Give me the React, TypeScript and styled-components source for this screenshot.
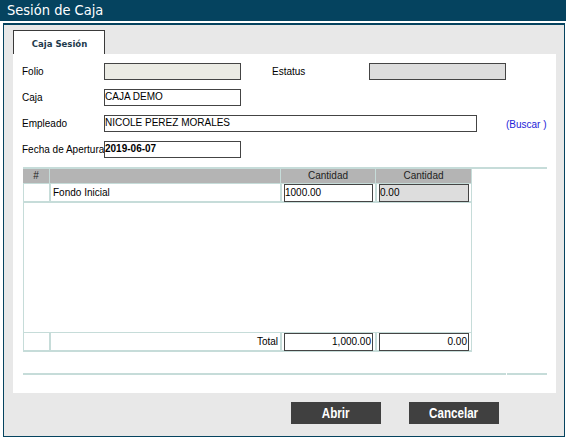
import React from 'react';
import styled, { createGlobalStyle } from 'styled-components';

const GlobalStyle = createGlobalStyle`
  html, body {
    margin: 0;
    padding: 0;
    background: #ffffff;
  }
  body {
    font-family: "Liberation Sans", Arial, sans-serif;
    font-size: 10px;
    color: #000;
  }
`;

const Window = styled.div`
  width: 566px;
  height: 439px;
  display: flex;
  flex-direction: column;
  overflow: hidden;
`;

const TitleBar = styled.header`
  height: 21px;
  background: #05435f;
  color: #ffffff;
  font-family: "DejaVu Sans Condensed", "DejaVu Sans", sans-serif;
  font-size: 14.5px;
  line-height: 21px;
  padding-left: 7px;
  flex-shrink: 0;
`;

const Frame = styled.div`
  margin: 2px 1px 2px 3px;
  border: 1px solid #05435f;
  border-top-width: 2px;
  background: #e8e8e8;
  flex: 1;
  display: flex;
  flex-direction: column;
  padding: 5px 8px 0 9px;
`;

const TabStrip = styled.div`
  display: flex;
`;

const Tab = styled.div`
  width: 92px;
  height: 24px;
  box-sizing: border-box;
  border: 1px solid #3a3a3a;
  border-bottom: none;
  background: #ffffff;
  font-family: "DejaVu Sans Condensed", "DejaVu Sans", sans-serif;
  font-weight: bold;
  font-size: 9.5px;
  color: #1d3a4c;
  display: flex;
  align-items: center;
  justify-content: center;
  padding: 1px 0 0 1px;
`;

const Panel = styled.section`
  background: #ffffff;
  height: 339px;
  padding: 9px 9px 0 9px;
  box-sizing: border-box;
  display: flex;
  flex-direction: column;
`;

const FormGrid = styled.div`
  display: grid;
  grid-template-columns: 82px 168px 97px 137px 1fr;
  grid-auto-rows: 17px;
  row-gap: 9px;
  align-items: center;
`;

const Label = styled.label<{ $col?: number }>`
  font-size: 10px;
  white-space: nowrap;
  grid-column: ${p => p.$col || 'auto'};
`;

const Field = styled.div<{ $bg?: string; $width: number; $bold?: boolean; $span?: number }>`
  width: ${p => p.$width}px;
  height: 17px;
  box-sizing: border-box;
  border: 1.5px solid #444;
  background: ${p => p.$bg || '#ffffff'};
  font-size: 10px;
  font-weight: ${p => (p.$bold ? 'bold' : 'normal')};
  line-height: 14px;
  white-space: nowrap;
  overflow: hidden;
  grid-column: span ${p => p.$span || 1};
`;

const LinkText = styled.a`
  color: #2323d8;
  font-size: 10px;
  text-decoration: none;
  white-space: nowrap;
  margin-top: 1px;
`;

const Rule = styled.div<{ $top: number }>`
  height: 2px;
  background: #c6dcd9;
  margin: ${p => p.$top}px 0 0 1px;
`;

const Table = styled.div`
  width: 449px;
  margin-left: 1px;
  display: grid;
  grid-template-columns: 27px 231px 95px 96px;
`;

const HeadCell = styled.div`
  height: 14px;
  background: #b4b4b4;
  border-right: 1px solid #c6dcd9;
  font-size: 10px;
  line-height: 14px;
  text-align: center;
  color: #222;
  &:last-child {
    border-right: none;
  }
`;

const Cell = styled.div<{ $align?: string }>`
  height: 20px;
  box-sizing: border-box;
  border-left: 1px solid #c6dcd9;
  border-right: 1px solid #c6dcd9;
  border-bottom: 2px solid #c6dcd9;
  border-top: 1px solid #c6dcd9;
  display: flex;
  align-items: center;
  justify-content: ${p => p.$align || 'flex-start'};
  padding: 0 2px;
  font-size: 10px;
`;

const CellInput = styled.div<{ $bg?: string; $right?: boolean }>`
  width: 90px;
  height: 18px;
  box-sizing: border-box;
  border: 1.5px solid #444;
  background: ${p => p.$bg || '#ffffff'};
  font-size: 10px;
  line-height: 15px;
  padding: 0 1px 0 0;
  text-align: ${p => (p.$right ? 'right' : 'left')};
`;

const EmptyArea = styled.div`
  grid-column: 1 / span 4;
  height: 129px;
  box-sizing: border-box;
  border-left: 1px solid #c6dcd9;
  border-right: 1px solid #c6dcd9;
`;

const FooterRule = styled.div`
  margin: 21px 0 0 1px;
  display: grid;
  grid-template-columns: 483px 1fr;
  column-gap: 1px;
`;

const RulePart = styled.div`
  height: 2px;
  background: #c6dcd9;
`;

const ButtonBar = styled.div`
  display: flex;
  justify-content: flex-end;
  gap: 28px;
  padding: 9px 57px 0 0;
`;

const Button = styled.button`
  width: 90px;
  height: 22px;
  border: none;
  background: #404040;
  color: #ffffff;
  font-family: "Liberation Sans", Arial, sans-serif;
  font-weight: bold;
  font-size: 14px;
  padding: 0;
  display: flex;
  align-items: center;
  justify-content: center;
`;

// the original uses a narrow bold face; squeeze Arial to match its width
const ButtonCaption = styled.span`
  display: inline-block;
  transform: scaleX(0.83);
`;

export default function App() {
  return (
    <Window>
      <GlobalStyle />
      <TitleBar>Sesión de Caja</TitleBar>
      <Frame>
        <TabStrip>
          <Tab>Caja Sesión</Tab>
        </TabStrip>
        <Panel>
          <FormGrid>
            <Label>Folio</Label>
            <Field $width={137} $bg="#ebebe4" />
            <Label $col={3}>Estatus</Label>
            <Field $width={137} $bg="#dddddd" />
            <span />

            <Label>Caja</Label>
            <Field $width={137}>CAJA DEMO</Field>
            <span />
            <span />
            <span />

            <Label>Empleado</Label>
            <Field $width={373} $span={3}>NICOLE PEREZ MORALES</Field>
            <LinkText>(Buscar )</LinkText>

            <Label>Fecha de Apertura</Label>
            <Field $width={137} $bold>2019-06-07</Field>
          </FormGrid>

          <Rule $top={9} />

          <Table>
            <HeadCell>#</HeadCell>
            <HeadCell />
            <HeadCell>Cantidad</HeadCell>
            <HeadCell>Cantidad</HeadCell>

            <Cell />
            <Cell>Fondo Inicial</Cell>
            <Cell>
              <CellInput>1000.00</CellInput>
            </Cell>
            <Cell>
              <CellInput $bg="#dddddd">0.00</CellInput>
            </Cell>

            <EmptyArea />

            <Cell />
            <Cell $align="flex-end">Total</Cell>
            <Cell>
              <CellInput $right>1,000.00</CellInput>
            </Cell>
            <Cell>
              <CellInput $right>0.00</CellInput>
            </Cell>
          </Table>

          <FooterRule>
            <RulePart />
            <RulePart />
          </FooterRule>
        </Panel>
        <ButtonBar>
          <Button><ButtonCaption>Abrir</ButtonCaption></Button>
          <Button><ButtonCaption>Cancelar</ButtonCaption></Button>
        </ButtonBar>
      </Frame>
    </Window>
  );
}
